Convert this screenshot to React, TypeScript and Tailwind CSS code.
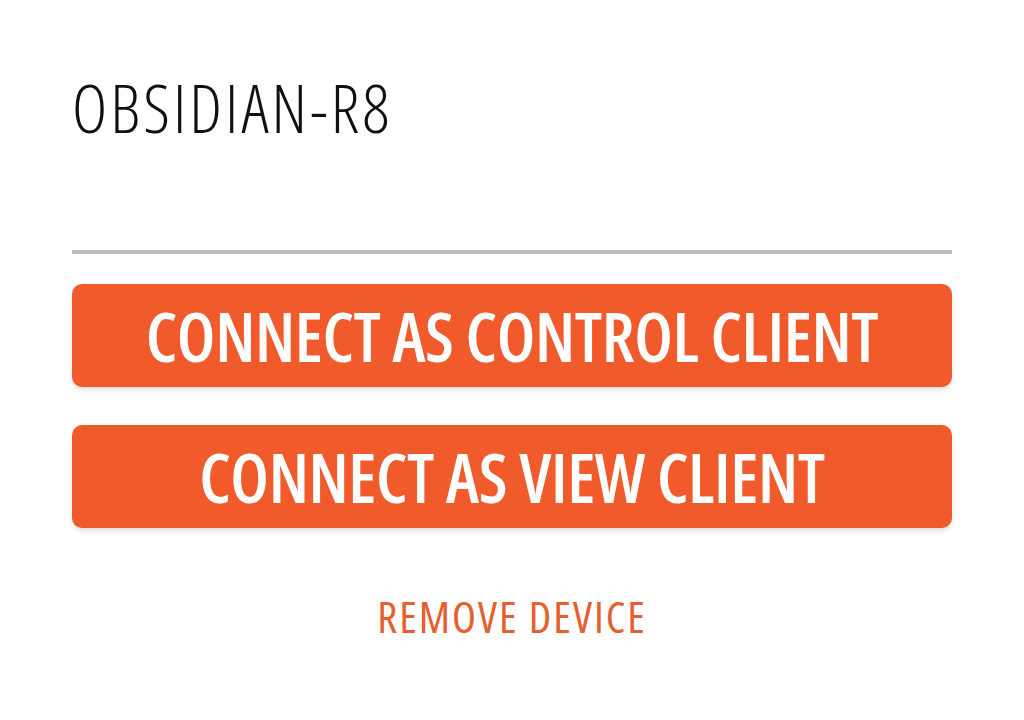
export default function App() {
  return (
    <div className="w-[1024px] h-[720px] bg-white px-[72px] pt-[74px] font-['Open_Sans',sans-serif]">
      <h1 className="text-[67px] leading-[67px] h-[67px] font-light font-stretch-[75%] tracking-[3px] text-[#111] whitespace-nowrap">
        OBSIDIAN-R8
      </h1>
      <div className="mt-[109px] h-[4px] bg-[#bdbdbd]" />
      <button className="mt-[30px] w-full h-[103px] rounded-[10px] bg-[#f15a2b] shadow-md flex items-center justify-center text-white text-[68px] leading-none font-semibold font-stretch-[75%] tracking-[-0.4px] whitespace-nowrap">
        CONNECT AS CONTROL CLIENT
      </button>
      <button className="mt-[38px] w-full h-[103px] rounded-[10px] bg-[#f15a2b] shadow-md flex items-center justify-center text-white text-[68px] leading-none font-semibold font-stretch-[75%] tracking-[-0.4px] whitespace-nowrap">
        CONNECT AS VIEW CLIENT
      </button>
      <div className="mt-[66px] text-center text-[44px] leading-[44px] text-[#e4602f] font-stretch-[75%] tracking-[2px] whitespace-nowrap">
        REMOVE DEVICE
      </div>
    </div>
  );
}
